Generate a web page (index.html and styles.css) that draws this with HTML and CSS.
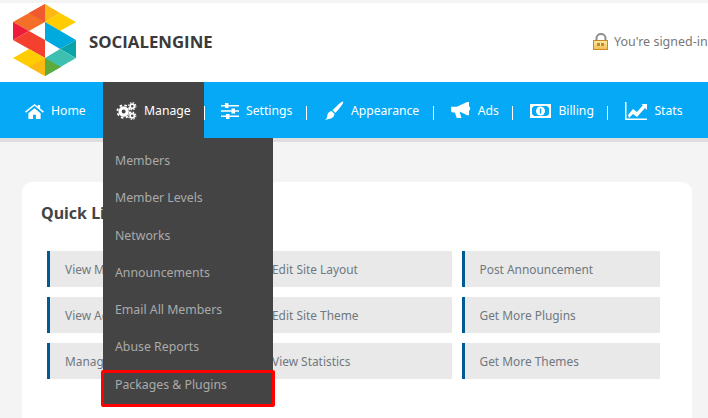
FILE: index.html
```html
<!DOCTYPE html>
<html>
<head>
<meta charset="utf-8">
<link rel="stylesheet" href="styles.css">
</head>
<body>
<header class="top">
  <div class="brand">
    <svg class="logo" width="76" height="80" viewBox="0 0 76 80">
      <polygon points="5,22 37,4 37,22 21,31" fill="#f4702a"/>
      <polygon points="21,13 37,4 37,22" fill="#f15a2f"/>
      <polygon points="37,4 52,13 37,22" fill="#fdb913"/>
      <polygon points="52,13 68,22 52,31 37,22" fill="#ffcc00"/>
      <polygon points="5,22 21,31 5,40" fill="#ee1c3a"/>
      <polygon points="21,31 37,40 37,58 5,40" fill="#f4402e"/>
      <polygon points="37,22 68,40 52,49 37,40" fill="#00a9de"/>
      <polygon points="68,40 68,58 52,49" fill="#0aa3ac"/>
      <polygon points="52,49 68,58 37,76 37,58" fill="#3dc0b0"/>
      <polygon points="37,58 53,67 37,76" fill="#5cab3c"/>
      <polygon points="5,58 21,49 37,58 37,76" fill="#ffcc00"/>
      <polygon points="21,67 37,58 37,76" fill="#fdb913"/>
    </svg>
    <span class="brand-name">SOCIALENGINE</span>
  </div>
  <div class="signed">
    <svg width="16" height="17" viewBox="0 0 16 17">
      <defs><linearGradient id="lk" x1="0" y1="0" x2="0" y2="1"><stop offset="0" stop-color="#fbe9a8"/><stop offset="1" stop-color="#f2bf50"/></linearGradient></defs>
      <path d="M3.500 8V5a4.500 4 0 0 1 9 0v3" fill="none" stroke="#8d8d8d" stroke-width="2"/>
      <rect x="0.500" y="7.500" width="14" height="9" fill="url(#lk)" stroke="#c98a2b"/>
      <rect x="4" y="10" width="7" height="3" fill="#c08a2a"/>
      <rect x="7" y="10" width="1" height="3" fill="#fbe9a8"/>
    </svg>
    <span>You're signed-in</span>
  </div>
</header>

<nav class="nav">
  <a class="nav-item first"><svg class="ico" width="19" height="16" viewBox="0 0 20 17"><path d="M10 1 0 9l1 1.300L10 3l9 7.300L20 9l-4-3.200V2h-2.500v1.800L10 1zM3.500 11v6H8.500v-4.500h3V17h5v-6L10 5.500z" fill="#fff"/></svg>Home</a>
  <a class="nav-item active"><svg class="ico" width="21" height="20" viewBox="0 0 22 20"><g fill="none" stroke="#fff"><circle cx="8" cy="10.500" r="3.800" stroke-width="3.400"/><circle cx="8" cy="10.500" r="6.600" stroke-width="1.800" stroke-dasharray="2.600 2.600"/><circle cx="17" cy="5" r="2.200" stroke-width="1.800"/><circle cx="17" cy="5" r="3.800" stroke-width="1.200" stroke-dasharray="1.500 1.500"/><circle cx="17" cy="15" r="2.200" stroke-width="1.800"/><circle cx="17" cy="15" r="3.800" stroke-width="1.200" stroke-dasharray="1.500 1.500"/></g></svg>Manage</a>
  <a class="nav-item"><svg class="ico" width="18" height="16" viewBox="0 0 18 16"><path d="M0 2h18v1.500H0zM0 7.300h18v1.500H0zM0 12.500h18V14H0z" fill="#fff"/><path d="M4 0h3.500v5H4zM10.500 5.500H14v5h-3.500zM5 11h3.500v5H5z" fill="#fff"/></svg>Settings</a>
  <a class="nav-item"><svg class="ico" width="20" height="20" viewBox="0 0 21 20"><path d="M20 0c1.500 1-5 9-8 12l-3-3c3-3 10-10 11-9zM8 10l3 3c0 4-4 6-10 6 3-1 2-4 3-6 1-2 3-3 4-3z" fill="#fff"/></svg>Appearance</a>
  <a class="nav-item"><svg class="ico" width="20" height="17" viewBox="0 0 21 18"><path d="M0 5h6L17 0h2v14h-2L9 10l2 7H6L4 11H2a2 2 0 0 1-2-2zM19 4.500a3 3 0 0 1 0 5z" fill="#fff"/></svg>Ads</a>
  <a class="nav-item"><svg class="ico" width="21" height="14" viewBox="0 0 21 14"><path fill-rule="evenodd" d="M0 0h21v14H0zM4 2 2 4v6l2 2h13l2-2V4l-2-2z" fill="#fff"/><circle cx="10.500" cy="7" r="4.500" fill="#fff"/><path d="M9.800 4.500h1.500v5H9.800z" fill="#05a9f5"/></svg>Billing</a>
  <a class="nav-item last"><svg class="ico" width="22" height="18" viewBox="0 0 22 18"><path d="M0 0h1.500v16.500H22V18H0z" fill="#fff"/><path d="M3 13l5-6 4 3 6-7-2-1h6v6l-2-2-8 9-4-3-4 4z" fill="#fff"/></svg>Stats</a>
</nav>

<main class="page">
  <section class="card">
    <h2 class="card-title">Quick Links</h2>
    <div class="links">
      <a class="link">View Members</a>
      <a class="link">Edit Site Layout</a>
      <a class="link">Post Announcement</a>
      <a class="link">View Ads</a>
      <a class="link">Edit Site Theme</a>
      <a class="link">Get More Plugins</a>
      <a class="link">Manage</a>
      <a class="link">View Statistics</a>
      <a class="link">Get More Themes</a>
    </div>
  </section>
</main>

<ul class="menu">
  <li>Members</li>
  <li>Member Levels</li>
  <li>Networks</li>
  <li>Announcements</li>
  <li>Email All Members</li>
  <li>Abuse Reports</li>
  <li class="marked">Packages &amp; Plugins</li>
</ul>
</body>
</html>
```

FILE: styles.css
```css
*, *::before, *::after { box-sizing: border-box; }
html, body { margin: 0; height: 100%; overflow: hidden; }
body {
  width: 708px;
  height: 418px;
  background: #f4f4f4;
  font-family: "Noto Sans", sans-serif;
  position: relative;
}
.top {
  margin-top: 3px;
  height: 79px;
  background: #fff;
  display: flex;
  align-items: center;
  justify-content: space-between;
  padding-left: 8px;
  white-space: nowrap;
  overflow: hidden;
}
.brand { display: flex; align-items: center; margin-top: -6px; }
.logo { display: block; margin-top: 1px; }
.brand-name {
  font-family: "Open Sans", sans-serif;
  font-weight: 700;
  font-size: 16.800px;
  color: #3a3a3a;
  margin-left: 5px;
  margin-top: 3px;
}
.signed {
  display: flex;
  align-items: center;
  gap: 5px;
  font-size: 12.500px;
  color: #777;
  width: 115px;
  flex: none;
  margin-top: -3px;
  overflow: hidden;
}
.signed svg { flex: none; }
.nav {
  height: 56px;
  background: #05a9f5;
  display: flex;
  align-items: center;
  box-shadow: 0 4px 0 #dedede;
  position: relative;
  color: #fff;
  font-size: 12.200px;
  white-space: nowrap;
}
.nav-item {
  display: flex;
  align-items: center;
  height: 56px;
  padding: 1px 14.500px 0 17px;
  position: relative;
}
.nav-item::after {
  content: "";
  position: absolute;
  right: 0;
  top: 24px;
  height: 14px;
  width: 1px;
  background: #fff;
}
.nav-item.first { padding-left: 25px; width: 103px; }
.nav-item.first::after, .nav-item.last::after { display: none; }
.nav-item.active { background: #444; width: 101px; padding-left: 13px; }
.nav-item.active::after { right: -1px; }
.ico { flex: none; margin-right: 7px; }
.page { padding: 44px 16px 0 22px; }
.card {
  background: #fff;
  border-radius: 10px 10px 0 0;
  height: 236px;
  padding: 21px 32px 0 19px;
}
.card-title {
  margin: 0 0 27px;
  font-size: 16px;
  line-height: 21px;
  font-weight: 700;
  color: #444;
}
.links {
  margin-left: 6px;
  display: grid;
  grid-template-columns: 197.500px 198px 198px;
  grid-auto-rows: 36px;
  column-gap: 9.500px;
  row-gap: 10px;
}
.link {
  display: flex;
  align-items: center;
  background: #e9e9e9;
  border-left: 3px solid #005a94;
  padding-left: 15px;
  font-size: 11.900px;
  color: #6f7880;
}
.menu {
  position: absolute;
  left: 103px;
  top: 138px;
  width: 170px;
  height: 268px;
  margin: 0;
  padding: 4px 0 0;
  list-style: none;
  background: #444;
  border-radius: 0 0 3px 3px;
  color: #aaa;
  font-size: 12.300px;
}
.menu li {
  height: 37.300px;
  line-height: 38px;
  padding-left: 12px;
}
.menu .marked {
  position: relative;
}
.menu .marked::after {
  content: "";
  position: absolute;
  left: -2px;
  top: 4px;
  width: 174px;
  height: 37px;
  border: 3px solid #f00;
  border-radius: 2px;
}
```
